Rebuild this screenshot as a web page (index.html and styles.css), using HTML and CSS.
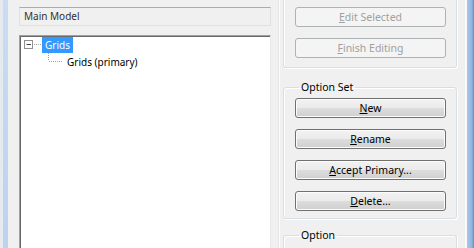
FILE: index.html
```html
<!DOCTYPE html>
<html lang="en">
<head>
  <meta charset="UTF-8">
  <title>Model Editor</title>
  <link rel="stylesheet" href="styles.css">
</head>
<body>
  <div class="frame">
    <div class="edge edge-left"></div>

    <div class="left-col">
      <div class="textbox">Main Model</div>
      <div class="tree">
        <div class="node">
          <svg class="lines" width="22" height="17" viewBox="0 0 22 17">
            <rect x="4.5" y="4.5" width="8" height="8" fill="#fff" stroke="#919191"/>
            <line x1="6.5" y1="8.5" x2="11" y2="8.5" stroke="#444"/>
            <line x1="14" y1="8.5" x2="22" y2="8.5" stroke="#a0a0a0" stroke-dasharray="1 1"/>
          </svg>
          <span class="label selected">Grids</span>
        </div>
        <div class="node">
          <svg class="lines" width="44" height="17" viewBox="0 0 44 17">
            <line x1="28.5" y1="0" x2="28.5" y2="8" stroke="#a0a0a0" stroke-dasharray="1 1"/>
            <line x1="29" y1="8.5" x2="42" y2="8.5" stroke="#a0a0a0" stroke-dasharray="1 1"/>
          </svg>
          <span class="label">Grids (primary)</span>
        </div>
      </div>
    </div>

    <div class="splitter"></div>

    <div class="right-col">
      <fieldset class="group group-top">
        <button class="btn" disabled><u>E</u>dit Selected</button>
        <button class="btn" disabled><u>F</u>inish Editing</button>
      </fieldset>

      <fieldset class="group group-set">
        <legend>Option Set</legend>
        <button class="btn"><u>N</u>ew</button>
        <button class="btn"><u>R</u>ename</button>
        <button class="btn"><u>A</u>ccept Primary...</button>
        <button class="btn"><u>D</u>elete...</button>
      </fieldset>

      <fieldset class="group group-last">
        <legend>Option</legend>
      </fieldset>
    </div>

    <div class="edge edge-right"></div>
  </div>
</body>
</html>
```

FILE: styles.css
```css
body {
  margin: 0;
  font-family: "Noto Sans", "Open Sans", sans-serif;
  font-size: 10.5px;
  color: #000;
  background: #f0f0f0;
  overflow: hidden;
}

.frame {
  display: flex;
  height: 248px;
  width: 474px;
  overflow: hidden;
}

.edge {
  flex: none;
}

.edge-left {
  width: 5px;
  border-left: 3px solid #e6eaef;
  background: linear-gradient(to bottom, #c9dcf2, #bcd3ee);
}

.edge-right {
  width: 7px;
  margin-left: 8px;
  border-left: 2px solid #fafafa;
  background: linear-gradient(to right, #a9c7ea, #8fb4df 70%, #5f8fc2);
}

/* left column: model box + tree */
.left-col {
  width: 252px;
  padding-left: 11px;
  padding-top: 7px;
  display: flex;
  flex-direction: column;
  font-size: 10px;
}

.textbox {
  height: 17px;
  line-height: 17px;
  padding-left: 4px;
  border: 1px solid #dde1e6;
  border-top-color: #a9abb0;
  background: #f0f0f0;
  color: #303030;
}

.tree {
  margin-top: 9px;
  flex: 1;
  background: #fff;
  border: 1px solid #a0a0a0;
  border-right-color: #e8e8e8;
  border-bottom: none;
  box-shadow: inset 1px 1px 0 #696969;
}

.node {
  display: flex;
  align-items: center;
  height: 17px;
}

.lines {
  flex: none;
  display: block;
}

.label {
  padding: 0 3px;
  line-height: 16px;
  height: 16px;
}

.label.selected {
  background: #3399ff;
  color: #fff;
}

.splitter {
  width: 1px;
  margin-left: 7px;
  background: #fbfbfb;
  border-left: 1px solid #e6e6e6;
}

/* right column: group boxes with buttons */
.right-col {
  width: 174px;
  margin-left: 3px;
  display: flex;
  flex-direction: column;
}

.group {
  margin: 0;
  padding: 4px 9px 7px 11px;
  border: 1px solid #d5dfe5;
  border-radius: 3px;
  box-shadow: inset 1px 1px 0 #fff, 1px 1px 0 #fff;
  display: flex;
  flex-direction: column;
  gap: 11px;
  flex: none;
}

.group legend {
  padding: 0 2px;
  margin-left: 4px;
  line-height: 14px;
}

.group-top {
  margin-top: -10px;
  padding-top: 16px;
  padding-bottom: 9px;
}

.group-set {
  margin-top: 12px;
}

.group-last {
  margin-top: 9px;
  flex: 1;
  border-bottom: none;
}

.btn {
  height: 20px;
  width: 151px;
  padding: 0;
  font: inherit;
  color: #000;
  border: 1px solid #707070;
  border-radius: 3px;
  background: linear-gradient(to bottom, #f2f2f2 0%, #ebebeb 49%, #dddddd 51%, #cfcfcf 100%);
  box-shadow: inset 0 0 0 1px #fcfcfc;
}

.btn:disabled {
  color: #a0a0a0;
  border-color: #adb2b5;
  background: #f4f4f4;
  box-shadow: none;
}
```
